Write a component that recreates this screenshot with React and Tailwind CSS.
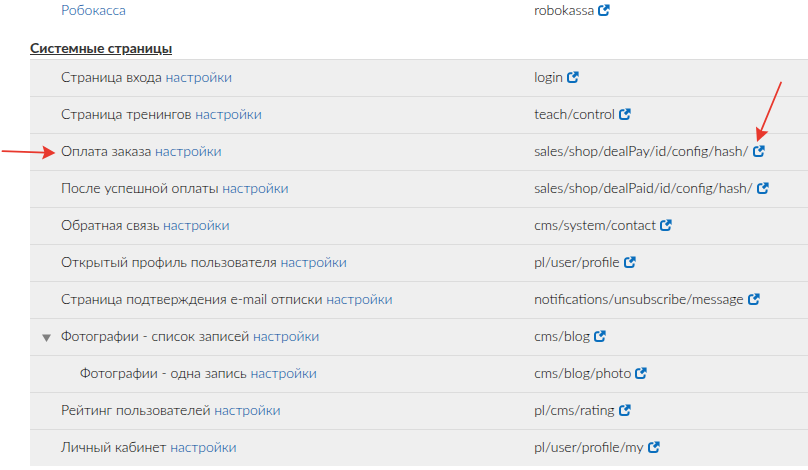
const systemPages = [
  { title: 'Страница входа', path: 'login' },
  { title: 'Страница тренингов', path: 'teach/control' },
  { title: 'Оплата заказа', path: 'sales/shop/dealPay/id/config/hash/' },
  { title: 'После успешной оплаты', path: 'sales/shop/dealPaid/id/config/hash/' },
  { title: 'Обратная связь', path: 'cms/system/contact' },
  { title: 'Открытый профиль пользователя', path: 'pl/user/profile' },
  { title: 'Страница подтверждения e-mail отписки', path: 'notifications/unsubscribe/message' },
  { title: 'Фотографии - список записей', path: 'cms/blog', expanded: true },
  { title: 'Фотографии - одна запись', path: 'cms/blog/photo', nested: true },
  { title: 'Рейтинг пользователей', path: 'pl/cms/rating' },
  { title: 'Личный кабинет', path: 'pl/user/profile/my' },
];

function OpenLink({ path }) {
  return (
    <a href={`#${path}`} aria-label={`Открыть ${path}`} className="ml-1 inline-block text-[#0a6ebd]">
      <svg viewBox="0 0 12 12" className="inline-block size-3 align-[-1px]" fill="none" aria-hidden="true">
        <path
          d="M5.4 2.2H3.2A2.2 2.2 0 0 0 1 4.4V8.8A2.2 2.2 0 0 0 3.2 11H7.4A2.2 2.2 0 0 0 9.6 8.8V7.6"
          stroke="currentColor"
          strokeWidth="2"
        />
        <path d="M6 0.4H11.6V6L9.9 4.3L7 7.2L4.9 5.1L7.8 2.2Z" fill="currentColor" />
      </svg>
    </a>
  );
}

function PageRow({ title, path, expanded, nested }) {
  return (
    <tr className="h-[37px] border-t border-[#dcdcdc] bg-[#efefef]">
      <td className={nested ? 'pb-0.5 pl-[50px]' : expanded ? 'pb-0.5 pl-3' : 'pb-0.5 pl-[31px]'}>
        {expanded && (
          <button type="button" aria-label="Свернуть" className="inline-block w-[19px] text-left text-[#808080]">
            <svg viewBox="0 0 9 8" className="inline-block h-2 w-[9px] align-[-1px]" aria-hidden="true">
              <path d="M0 0.5H9L4.5 8Z" fill="currentColor" />
            </svg>
          </button>
        )}
        {title}{' '}
        <a href={`#settings/${path}`} className="text-[#004c9c]">настройки</a>
      </td>
      <td className="pb-0.5">
        {path}
        <OpenLink path={path} />
      </td>
    </tr>
  );
}

function Arrows() {
  return (
    <svg className="pointer-events-none absolute top-0 left-0 h-[170px] w-[808px]" viewBox="0 0 808 170" aria-hidden="true">
      <g stroke="#e8382d" strokeWidth="1.8" strokeLinecap="round">
        <path d="M2.5 151.2L45 152.7" />
        <path d="M781 82.5L761 131" />
      </g>
      <g fill="#e8382d">
        <path d="M55.5 153L42 159.5L44.5 152.7L42.5 145.5Z" />
        <path d="M757 142L756 126.5L761.5 131L768.5 131.5Z" />
      </g>
    </svg>
  );
}

export default function App() {
  return (
    <main className="relative min-h-screen overflow-hidden bg-white pl-[30px] font-['Lato','Noto_Sans',sans-serif] text-sm font-light text-black">
      <table className="w-full table-fixed border-collapse">
        <colgroup>
          <col className="w-[64.8%]" />
          <col />
        </colgroup>
        <tbody>
          <tr className="h-[22px]">
            <td className="pb-0.5 pl-[31px]">
              <a href="#robokassa" className="text-[#004c9c]">Робокасса</a>
            </td>
            <td className="pb-0.5">
              robokassa
              <OpenLink path="robokassa" />
            </td>
          </tr>
          <tr className="h-[37px]">
            <th colSpan={2} className="pb-px text-left align-bottom font-bold text-[#333333] underline">
              Системные страницы
            </th>
          </tr>
          {systemPages.map((page) => (
            <PageRow key={page.path} {...page} />
          ))}
        </tbody>
      </table>
      <Arrows />
    </main>
  );
}
